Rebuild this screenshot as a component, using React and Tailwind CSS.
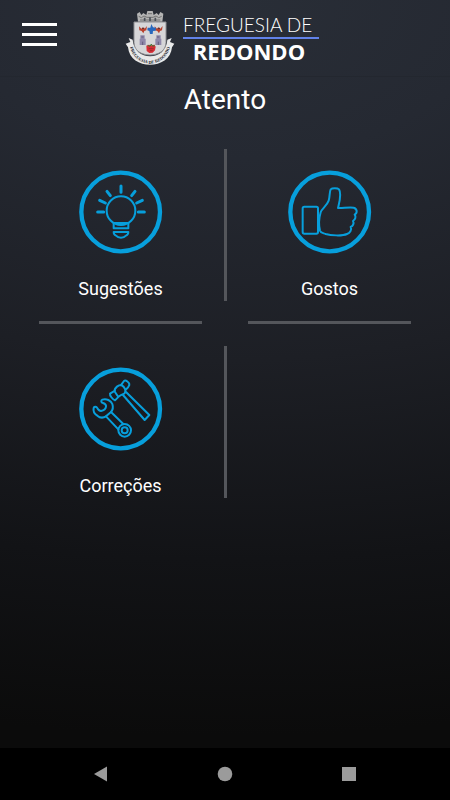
// App.jsx
function BulbIcon() {
  return (
    <svg viewBox="26 16 252 252" className="h-[84px] w-[84px]" fill="none" stroke="#079fdc" strokeWidth="6" strokeLinecap="round" strokeLinejoin="round" aria-hidden="true">
      <circle cx="151" cy="142" r="118" strokeWidth="13" />
      <circle cx="152" cy="138" r="43" />
      <path d="M130 175H174V191H130ZM130 202H174C174 207 172 211 167 213C160 221 144 221 137 213C132 211 130 207 130 202Z" />
      <path strokeWidth="9" d="M152 64V83M110 80L120 93M194 80L184 93M88 107L105 115M216 107L199 115M82 142H100M204 142H222" />
    </svg>
  );
}

function ThumbIcon() {
  return (
    <svg viewBox="23 16 252 252" className="h-[84px] w-[84px]" fill="none" stroke="#079fdc" strokeWidth="6" strokeLinecap="round" strokeLinejoin="round" aria-hidden="true">
      <circle cx="148" cy="142" r="118" strokeWidth="13" />
      <rect x="67" y="126" width="46" height="81" rx="5" />
      <path d="M121 143C124 132 139 125 145 108C149 96 147 82 151 74C155 70 172 70 176 74C185 88 177 112 173 130C188 131 203 127 220 129C231 132 232 145 223 150C228 156 225 165 218 169C222 176 218 184 211 187C216 196 208 205 200 208C185 215 150 212 136 208C129 205 121 205 119 198C115 182 116 160 121 143Z" />
    </svg>
  );
}

function ToolsIcon() {
  return (
    <svg viewBox="26 21 252 252" className="h-[84px] w-[84px]" fill="none" stroke="#079fdc" strokeWidth="6" strokeLinecap="round" strokeLinejoin="round" aria-hidden="true">
      <circle cx="151" cy="147" r="118" strokeWidth="13" />
      {/* wrench */}
      <path d="M107 169C99 174 89 174 81 167C73 162 68 153 70 144C71 139 77 139 80 143C83 149 87 153 92 153C99 152 106 147 107 140C108 134 104 131 98 129C92 128 91 121 96 119C108 115 122 121 126 132C129 141 127 150 122 156Z" />
      <path d="M122 156L159 192M107 169L144 208" />
      <circle cx="163" cy="211" r="19" />
      <circle cx="163" cy="211" r="9" />
      {/* hammer */}
      <path d="M134 92L119 101C118 107 126 117 134 121L146 109M132 93C134 82 144 75 153 75C164 81 168 92 163 100C155 103 148 106 144 111Z" />
      <path d="M153 74L161 63C166 59 178 67 177 75C175 81 171 85 167 88M158 105L223 180L237 165L167 96" />
    </svg>
  );
}

function Crest() {
  return (
    <svg viewBox="15 0 150 195" className="h-[65px] w-[50px]" aria-hidden="true">
      <defs>
        <path id="ribbon" d="M27 108C32 198 148 198 153 108" />
      </defs>
      {/* mural crown */}
      <path d="M51 26L59 21L64 30L70 24L79 30L82 18H98L101 30L110 24L116 30L121 21L130 26L127 50H54Z" fill="#b4b4b4" />
      <path d="M56 34L64 38L72 33L81 37H99L108 33L116 38L125 34M60 45H121M84 26H96" fill="none" stroke="#737373" strokeWidth="3" />
      <path d="M74 38V48M90 37V49M106 38V48" stroke="#4b5058" strokeWidth="5" />
      {/* shield */}
      <path d="M42 51H138V112C138 137 116 150 90 150S42 137 42 112Z" fill="#d6d6d8" stroke="#8e8e92" strokeWidth="3" />
      <path d="M57 64L64 71L69 67L74 71L81 63L79 76L73 78L70 85L65 78L58 76Z" fill="#b9412d" />
      <path d="M104 64L111 71L116 67L121 71L128 63L126 76L120 78L117 85L112 78L105 76Z" fill="#b9412d" />
      <path d="M66 70H73M113 70H120" stroke="#5c2c2c" strokeWidth="3" />
      <path d="M94 57L99 67L108 68L107 77L99 78L98 87L90 87L88 78L82 76L83 68L91 68Z" fill="#2868bd" />
      <path d="M59 120V101H61V91H74V101H77V120ZM106 120V101H109V91H122V101H124V120Z" fill="#8f88aa" />
      <path d="M64 96H71M111 96H118M68 110V120M115 110V120" stroke="#635d7c" strokeWidth="3" />
      <path d="M79 122L86 119L94 121L103 119L107 125L105 136L98 143L88 144L80 138Z" fill="#d72d35" />
      <path d="M83 121L90 124L94 117L98 124L104 121" fill="none" stroke="#3e7a38" strokeWidth="3" />
      <path d="M86 131H101M90 137H98" stroke="#86262b" strokeWidth="2" />
      {/* ribbon */}
      <path d="M26 99L38 104C42 170 139 170 142 104L155 99L150 111L163 116L156 127C150 197 30 197 24 127L17 116L31 111Z" fill="#e9e9e9" />
      <text fill="#202329" fontSize="13" fontWeight="700" fontFamily="Liberation Serif, serif">
        <textPath href="#ribbon" startOffset="50%" textAnchor="middle">FREGUESIA DE REDONDO</textPath>
      </text>
    </svg>
  );
}

const Divider = () => <div className="mx-auto w-[3px] bg-[#54565b]" />;

function MenuItem({ icon, label }) {
  return (
    <button type="button" className="flex flex-col items-center pt-[21px]">
      {icon}
      <span className="mt-[23px] text-lg leading-6 text-white">{label}</span>
    </button>
  );
}

export default function App() {
  return (
    <div className="flex min-h-screen flex-col bg-[radial-gradient(300%_100%_at_50%_0%,#292e37_0%,#252932_20%,#1d1f25_45%,#121316_70%,#0b0b0b_92%)] font-[Roboto,sans-serif] text-white">
      <header className="grid h-[77px] grid-cols-[1fr_auto_1fr] items-start border-b border-[#23272f]">
        <button type="button" aria-label="Menu" className="ml-[22px] mt-[23px] flex w-[35px] flex-col gap-[7px]">
          <span className="h-[3px] w-full bg-white" />
          <span className="h-[3px] w-full bg-white" />
          <span className="h-[3px] w-full bg-white" />
        </button>
        <a href="#" className="flex pr-1.5 pt-[5px]">
          <Crest />
          <span className="ml-2 flex w-[136px] flex-col pt-2">
            <span className="whitespace-nowrap font-[Lato,sans-serif] text-[19px] font-light leading-6">FREGUESIA DE</span>
            <span className="h-[2px] bg-[#6282e8]" />
            <span className="pr-1 text-center font-['Open_Sans',sans-serif] text-[22px] font-bold leading-6">REDONDO</span>
          </span>
        </a>
      </header>

      <main className="flex-1 pb-8">
        <h1 className="pb-[33px] pt-1.5 text-center text-[28px] leading-[33px]">Atento</h1>
        <div className="grid grid-cols-[1fr_46px_1fr] px-[39px]">
          <MenuItem icon={<BulbIcon />} label="Sugestões" />
          <Divider />
          <MenuItem icon={<ThumbIcon />} label="Gostos" />

          <div className="mb-[22px] mt-5 h-[3px] bg-[#54565b]" />
          <div />
          <div className="mb-[22px] mt-5 h-[3px] bg-[#54565b]" />

          <MenuItem icon={<ToolsIcon />} label="Correções" />
          <Divider />
          <div />
        </div>
      </main>

      <nav className="grid h-[52px] grid-cols-3 items-center bg-black px-[39px]">
        <button type="button" aria-label="Back" className="flex justify-center">
          <svg viewBox="0 0 16 16" className="h-4 w-4" fill="#9b9b9b"><path d="M1 8L14 0.5V15.5Z" /></svg>
        </button>
        <button type="button" aria-label="Home" className="flex justify-center">
          <svg viewBox="0 0 16 16" className="h-4 w-4" fill="#9b9b9b"><circle cx="8" cy="8" r="7.3" /></svg>
        </button>
        <button type="button" aria-label="Recent apps" className="flex justify-center">
          <svg viewBox="0 0 16 16" className="h-4 w-4" fill="#9b9b9b"><rect x="1" y="1" width="14" height="14" /></svg>
        </button>
      </nav>
    </div>
  );
}
